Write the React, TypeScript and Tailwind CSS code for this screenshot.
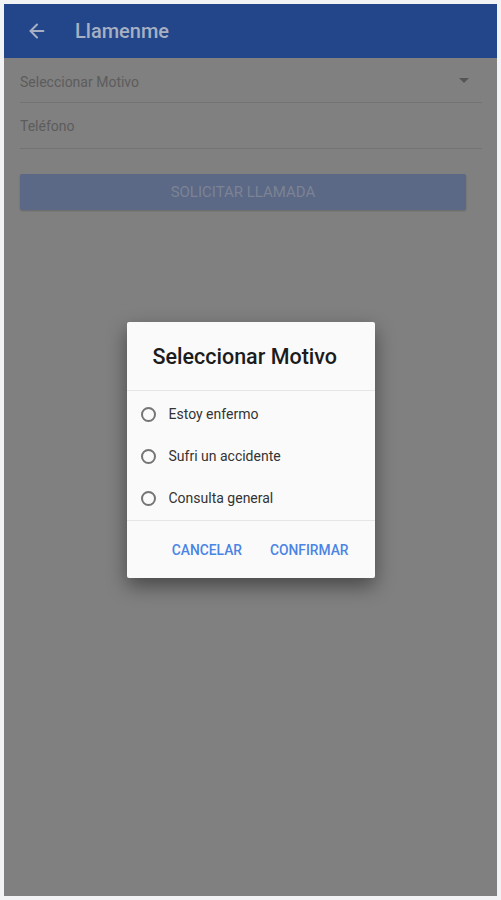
import React from 'react';
import { ArrowLeft } from 'lucide-react';

const motivos = ['Estoy enfermo', 'Sufri un accidente', 'Consulta general'];

const Radio: React.FC = () => (
  <span className="w-[15px] h-[15px] rounded-full border-2 border-[#757575] shrink-0" />
);

const App: React.FC = () => {
  return (
    <div className="w-[501px] h-[900px] bg-[#f1f3f5] p-[4px] font-['Roboto',sans-serif]">
      <div className="relative w-[493px] h-[892px] bg-[#808080] flex flex-col">
        {/* Toolbar */}
        <div className="h-[54px] bg-[#23468a] flex items-center pl-[22px] shrink-0">
          <ArrowLeft className="h-[22px] w-[22px] text-[#a6b0c2]" strokeWidth={2.2} />
          <span className="ml-[27px] text-[20px] font-medium text-[#a6b0c2]">Llamenme</span>
        </div>

        {/* Form (dimmed) */}
        <div className="pl-[16px] pr-[15px]">
          <div className="h-[45px] flex items-center justify-between border-b border-[#737373]">
            <span className="text-[14px] text-[#5c5c5c] pt-[4px]">Seleccionar Motivo</span>
            <svg width="10" height="6" viewBox="0 0 10 6" className="mr-[13px] mt-[2px]">
              <path d="M0 0h10L5 5z" fill="#555555" />
            </svg>
          </div>
          <div className="h-[46px] flex items-center border-b border-[#737373]">
            <span className="text-[14px] text-[#5c5c5c] pt-[2px]">Teléfono</span>
          </div>
        </div>
        <div className="mt-[25px] ml-[16px] w-[446px] h-[36px] rounded-[2px] bg-[#5b6986] shadow-[0_1px_2px_rgba(0,0,0,0.2)] flex items-center justify-center">
          <span className="text-[15px] text-[#7b8394]">SOLICITAR LLAMADA</span>
        </div>

        {/* Dialog */}
        <div className="absolute inset-0 flex items-center justify-center">
          <div className="w-[248px] bg-[#fafafa] rounded-[2px] shadow-[0_8px_20px_rgba(0,0,0,0.45)]">
            <div className="h-[69px] flex items-center pl-[26px] pt-[2px] border-b border-[#e6e6e6]">
              <span className="text-[21.5px] font-medium text-[#1c1c1c]">Seleccionar Motivo</span>
            </div>
            <div className="h-[130px] flex flex-col pt-[2px] border-b border-[#e6e6e6]">
              {motivos.map((m) => (
                <div key={m} className="flex-1 flex items-center pl-[14px]">
                  <Radio />
                  <span className="ml-[13px] text-[14px] text-[#333333]">{m}</span>
                </div>
              ))}
            </div>
            <div className="h-[57px] flex items-center justify-end pr-[26px] pt-[2px] gap-[28px]">
              <span className="text-[13.8px] font-medium text-[#4a84e4]">CANCELAR</span>
              <span className="text-[13.8px] font-medium text-[#4a84e4]">CONFIRMAR</span>
            </div>
          </div>
        </div>
      </div>
    </div>
  );
};

export default App;
